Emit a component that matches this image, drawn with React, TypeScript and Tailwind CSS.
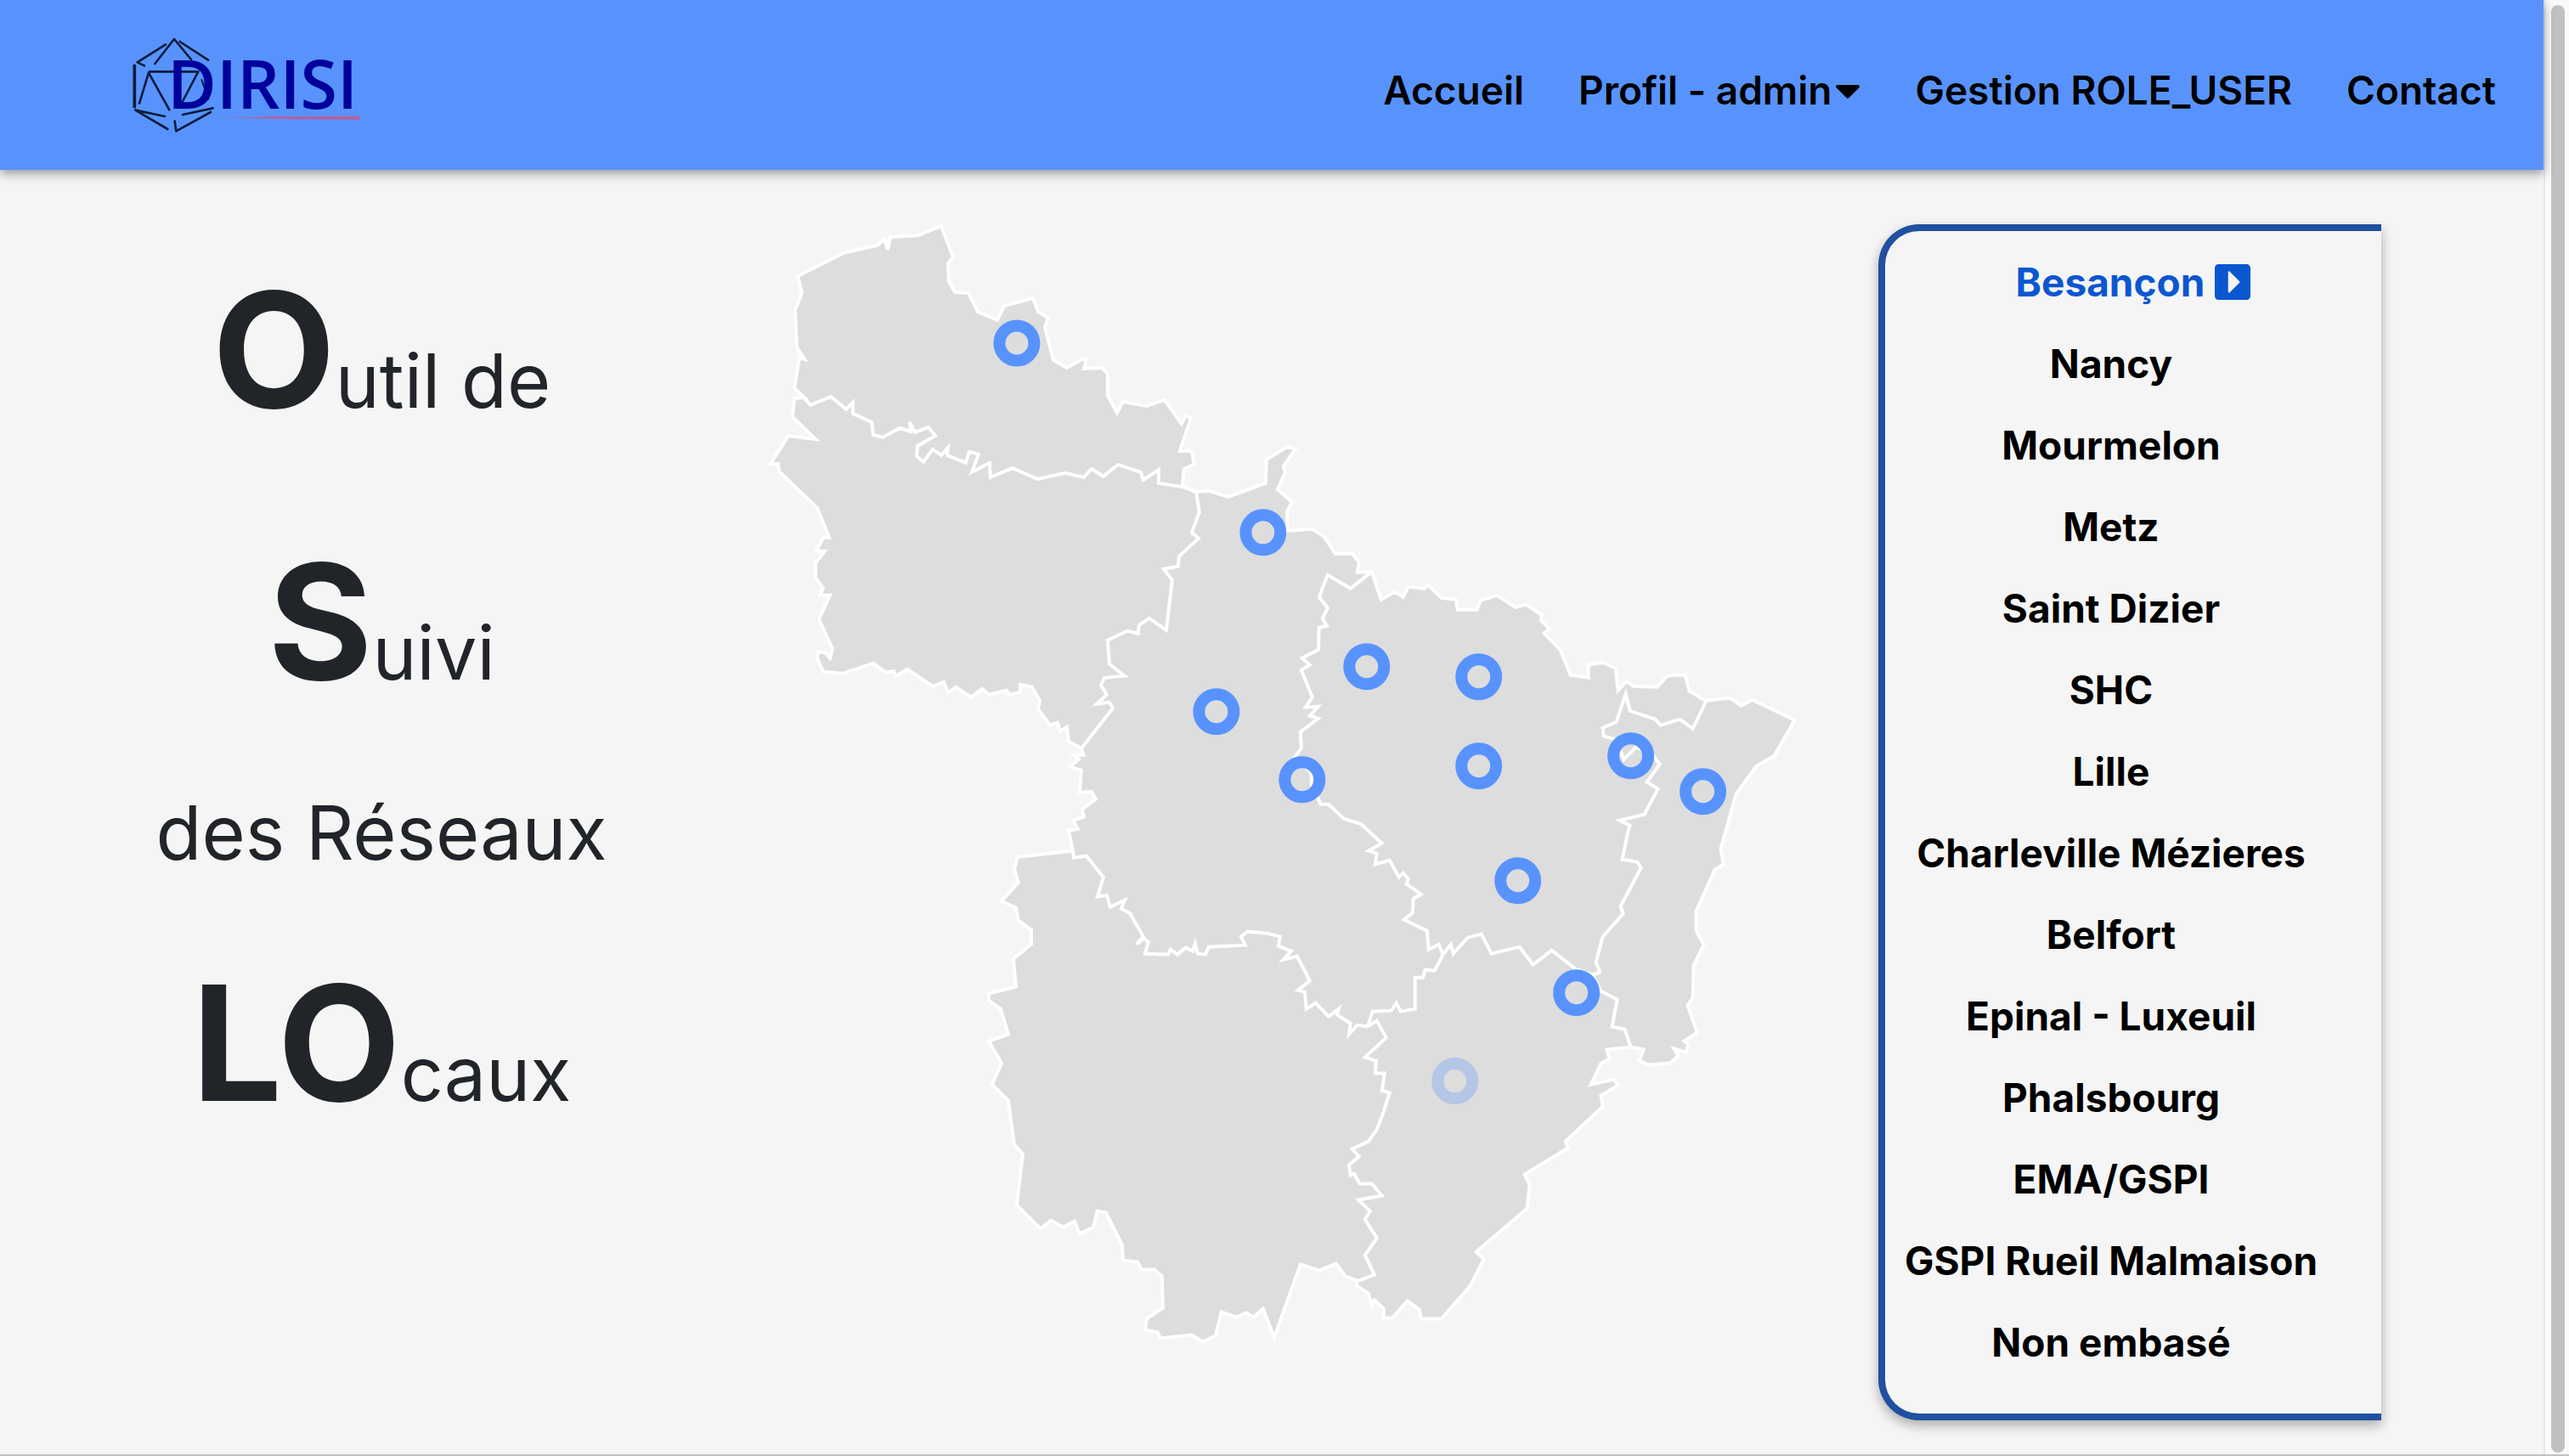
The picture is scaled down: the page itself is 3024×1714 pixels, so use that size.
import React, { useState } from 'react';
import { FaCaretDown, FaCaretSquareRight } from 'react-icons/fa';

interface Marker {
  site: string;
  x: number;
  y: number;
}

const sites: string[] = [
  'Besançon',
  'Nancy',
  'Mourmelon',
  'Metz',
  'Saint Dizier',
  'SHC',
  'Lille',
  'Charleville Mézieres',
  'Belfort',
  'Epinal - Luxeuil',
  'Phalsbourg',
  'EMA/GSPI',
  'GSPI Rueil Malmaison',
  'Non embasé',
];

const markers: Marker[] = [
  { site: 'Lille', x: 1197, y: 404 },
  { site: 'Charleville Mézieres', x: 1487, y: 627 },
  { site: 'EMA/GSPI', x: 1609, y: 785 },
  { site: 'Metz', x: 1741, y: 797 },
  { site: 'Mourmelon', x: 1432, y: 838 },
  { site: 'Saint Dizier', x: 1533, y: 918 },
  { site: 'Nancy', x: 1741, y: 902 },
  { site: 'Phalsbourg', x: 1920, y: 890 },
  { site: 'SHC', x: 2005, y: 932 },
  { site: 'Epinal - Luxeuil', x: 1787, y: 1037 },
  { site: 'Belfort', x: 1856, y: 1169 },
  { site: 'Besançon', x: 1713, y: 1273 },
];

// Outer outline of the whole zone
const outline =
  'M939 325L944 345L936 365L938 409L947 423L941 421L935 457L947 468L935 469L933 491L960 517L928 513L907 546L916 546L917 555L962 598L976 633L969 633L961 649L971 649L960 663V680L969 693L965 701H977L964 729L980 764L977 775L971 768H963L962 775L969 791L992 793L1028 781L1043 792L1052 790L1055 796L1068 788L1098 808L1111 803L1116 816L1125 809L1143 821L1156 811L1164 818L1185 813L1188 818L1201 815V806L1215 809L1224 825L1222 835L1236 854L1245 851L1248 861L1256 856L1258 873L1273 881L1276 889H1264L1270 894L1260 903L1273 907L1271 933L1285 932L1290 941L1274 953L1276 962L1263 966L1269 976L1258 978L1263 1002L1198 1009L1194 1024L1199 1039L1179 1061L1196 1069L1199 1084L1214 1095V1112L1193 1129L1196 1162L1164 1170V1178L1178 1188L1187 1218L1164 1226L1179 1252L1168 1277L1187 1296L1194 1348L1204 1359L1197 1419L1225 1447L1237 1437L1252 1445L1265 1438L1271 1453L1287 1445L1292 1426L1302 1428L1321 1466L1322 1484L1339 1486L1344 1495H1359L1368 1503L1369 1540L1350 1553L1348 1566L1363 1569L1366 1576L1403 1572L1416 1580L1431 1573L1438 1545L1455 1551L1467 1546L1476 1551L1487 1541L1500 1575L1531 1489L1553 1496L1573 1488L1584 1503L1598 1508L1597 1514L1611 1523L1615 1537L1618 1531L1629 1541V1552H1639L1657 1532L1671 1542L1673 1553H1697L1731 1514L1747 1483L1738 1474L1798 1423L1801 1395L1795 1383L1846 1352L1843 1344L1887 1303L1885 1290L1905 1278L1900 1271L1873 1277L1885 1252L1895 1247L1892 1236L1920 1233L1935 1236L1930 1249L1941 1254L1966 1252L1976 1243L1971 1235L1985 1239L1988 1230L1983 1226L1998 1216L1987 1184L1993 1175L1994 1137L2006 1112L1997 1096V1073L2019 1024L2029 1018L2026 999L2044 935L2068 902L2089 890L2113 848L2063 824L2050 831L2037 822L2008 825L1989 814L1984 795H1973L1963 796L1951 809L1923 808L1915 802L1905 813L1902 787L1887 780L1870 783V798L1849 795L1837 765L1818 746L1824 740L1814 730L1815 724L1797 712L1784 715L1762 701L1743 707L1739 718H1716L1714 706L1697 704L1681 689L1677 693L1658 691L1652 703L1642 697L1626 706L1615 673L1598 674L1600 662L1592 652H1572L1559 632L1545 623L1516 625L1515 603L1521 591L1504 576L1513 557L1511 549L1525 529L1516 526L1491 541L1490 569L1446 585L1423 578L1408 579L1392 572L1394 552L1406 547L1403 531H1389L1402 492L1396 489L1391 499L1371 471L1350 478L1322 473L1315 486L1304 466V440L1297 433L1276 434L1279 423H1274L1256 433L1240 424L1230 385L1234 374L1222 367L1216 351L1182 360L1174 377L1151 367L1140 345L1124 344L1117 331L1116 310L1122 303L1108 266L1081 277L1048 279L1045 294L1041 281L1033 289L995 297Z';

// Inner limits between the zones
const borders: string[] = [
  'M947 469L954 477L978 467L996 482L1004 474V487L1026 497L1028 512L1039 515L1059 504L1072 508L1071 497L1077 509L1093 503L1101 513L1080 525L1079 537L1087 544L1098 529L1108 536L1116 527L1115 536L1137 545L1141 532L1152 535L1144 556L1165 545L1166 562L1192 551L1221 564L1254 557L1276 562L1285 552L1299 561L1316 547L1343 556L1346 565L1364 553V569L1391 573L1408 579',
  'M1408 579L1412 603L1403 627L1411 634L1388 655L1387 667L1370 670L1380 683L1373 742L1353 728L1341 736L1340 746L1327 743L1304 754L1306 782L1324 796L1300 798L1296 807L1303 818L1291 829L1306 827L1310 834L1274 880',
  'M1615 673L1590 693L1563 677L1553 703L1563 716L1557 728L1562 737L1553 739L1552 765L1533 775L1542 783L1532 789L1545 821L1537 833L1552 832L1542 843L1552 846L1531 862L1532 881L1524 892L1544 910V925L1555 947H1564L1582 964L1602 970L1627 993L1611 1002L1621 1005L1619 1018L1636 1013L1647 1033L1652 1028L1658 1035L1656 1041L1673 1053L1664 1058L1663 1075L1653 1083L1680 1096L1682 1118L1694 1112L1699 1124',
  'M1699 1124L1689 1143L1678 1142L1675 1151H1666V1188L1649 1191L1644 1181L1638 1190L1616 1191L1610 1209',
  'M1263 1002L1264 1010L1279 1008L1299 1033L1292 1056L1303 1054L1307 1068L1324 1060L1320 1070L1330 1075L1346 1103L1338 1112L1346 1105L1352 1109L1348 1123L1375 1124L1378 1118L1386 1124L1396 1116L1404 1120L1407 1111L1410 1123L1419 1124L1423 1115L1466 1113L1461 1103L1469 1097L1492 1099L1507 1103L1505 1114L1520 1120L1511 1130L1527 1126L1542 1155L1528 1166L1536 1168L1538 1188L1549 1181L1564 1197L1576 1188L1574 1195L1590 1205L1588 1218L1598 1207L1610 1209',
  'M1610 1209L1621 1202L1632 1222L1607 1245L1620 1249L1619 1264H1630L1627 1284L1636 1287L1628 1312L1621 1330L1611 1344L1592 1353L1600 1362L1588 1372L1590 1384L1594 1382L1601 1394H1615L1627 1408L1599 1413L1613 1426L1607 1436L1621 1458L1607 1478L1618 1501L1600 1508',
  'M1699 1124L1708 1112L1711 1123L1728 1104L1744 1100L1756 1123L1789 1115L1805 1136L1827 1119L1855 1141L1875 1148L1884 1145',
  'M1884 1145L1879 1133L1887 1103L1911 1076L1908 1067L1932 1022L1928 1015L1910 1012L1917 978L1919 972L1907 966L1936 959L1952 929L1939 921L1954 900L1946 889L1926 880L1912 894L1907 883L1900 870L1888 867L1887 857L1903 850L1914 817L1919 837L1949 847L1955 854L1978 847L1993 858L2009 825',
  'M1875 1148L1885 1167L1904 1177L1898 1209L1913 1212L1920 1233',
];

const Logo: React.FC = () => (
  <svg viewBox="0 0 1020 480" className="w-[340px] h-[160px]" role="img" aria-label="DIRISI">
    <defs>
      <linearGradient id="underline" x1="0" x2="1" y1="0" y2="0">
        <stop offset="0" stopColor="#b0609f" stopOpacity="0" />
        <stop offset="0.4" stopColor="#a865ab" />
        <stop offset="1" stopColor="#b9619a" />
      </linearGradient>
    </defs>
    <g stroke="#0a1c3d" strokeWidth="8" fill="none" strokeLinecap="round" strokeLinejoin="round">
      <path d="M225 97L125 160L150 172" />
      <path d="M187 165L255 78L315 150" />
      <path d="M275 87L375 152" />
      <path d="M115 172V318" strokeWidth="11" />
      <path d="M132 305L165 197L238 328" />
      <path d="M168 193H340L284 300" />
      <path d="M352 222L376 290" strokeWidth="6" />
      <path d="M222 351L118 329L232 396" />
      <path d="M257 368L262 403L384 336" />
      <path d="M285 345L392 322" />
    </g>
    <path d="M400 353L640 351L912 350V362L640 361L400 357Z" fill="url(#underline)" />
    <text x="231" y="325" fill="#00009b" fontSize="237" className="font-['Open_Sans',sans-serif] font-semibold">
      DIRISI
    </text>
  </svg>
);

const Header: React.FC = () => (
  <header className="relative flex items-center justify-between h-50 pl-30 pr-6 bg-[#5893fd] shadow-[0_4px_12px_rgba(0,0,0,0.4)]">
    <a href="#accueil">
      <Logo />
    </a>
    <nav className="flex items-center pt-3 text-[46px] font-semibold text-black">
      <a href="#accueil" className="px-8">Accueil</a>
      <button type="button" className="flex items-center gap-1 px-8">
        Profil - admin <FaCaretDown className="w-[30px] h-[48px]" />
      </button>
      <a href="#gestion" className="px-8">Gestion ROLE_USER</a>
      <a href="#contact" className="px-8">Contact</a>
    </nav>
  </header>
);

const Title: React.FC = () => (
  <h1 className="flex flex-col gap-24 w-[30%] pt-25 text-center text-[88px] leading-[80px] text-[#212529]">
    <span><b className="text-[188px] leading-[224px]">O</b>util de</span>
    <span><b className="text-[188px] leading-[224px]">S</b>uivi</span>
    <span>des Réseaux</span>
    <span><b className="text-[188px] leading-[224px]">LO</b>caux</span>
  </h1>
);

const ZoneMap: React.FC<{ active: string; onSelect: (site: string) => void }> = ({ active, onSelect }) => (
  <svg viewBox="898 248 1228 1340" className="w-[41%] h-auto mt-12 shrink-0" role="img" aria-label="Carte des sites">
    <g stroke="#fff" strokeWidth="4">
      <path d={outline} fill="#ddd" />
      {borders.map((d, i) => (
        <path key={i} d={d} fill="none" />
      ))}
    </g>
    {markers.map((marker) => (
      <circle
        key={marker.site}
        cx={marker.x}
        cy={marker.y}
        r="20.5"
        fill="none"
        stroke="#5893fd"
        strokeWidth="14"
        opacity={marker.site === active ? 0.3 : 1}
        onMouseEnter={() => onSelect(marker.site)}
      />
    ))}
  </svg>
);

const App: React.FC = () => {
  const [active, setActive] = useState<string>('Besançon');

  return (
    <div className="flex min-h-screen border-b-2 border-[#c1c1c1] bg-[#f5f5f5] font-['Inter',sans-serif]">
      <div className="flex-1 min-w-0">
        <Header />
        <main className="flex items-start">
          <Title />
          <ZoneMap active={active} onSelect={setActive} />
          <ul className="w-[592px] mt-16 mb-10 ml-auto mr-[191px] pt-3 pb-9 pr-13 rounded-l-[48px] border-8 border-r-0 border-[#2050a0] bg-[#f5f5f5] shadow-[0_6px_14px_rgba(0,0,0,0.3)] text-[46px] font-bold text-center text-black">
            {sites.map((site) => (
              <li key={site} className="h-24">
                {site === active ? (
                  <a href="#site" className="flex items-center justify-center gap-3 h-24 pl-13 text-[#0b57d0]">
                    {site} <FaCaretSquareRight className="w-[42px] h-[48px]" />
                  </a>
                ) : (
                  <a href="#site" className="block leading-[96px] whitespace-nowrap" onMouseEnter={() => setActive(site)}>
                    {site}
                  </a>
                )}
              </li>
            ))}
          </ul>
        </main>
      </div>
      {/* scroll track */}
      <div className="flex flex-col w-[30px] pt-[6px] pb-[2px] pl-[7px] border-l-2 border-[#e8e8e8] bg-[#fafafa]">
        <div className="flex-1 w-4 rounded-full bg-[#c1c1c1]" />
      </div>
    </div>
  );
};

export default App;
